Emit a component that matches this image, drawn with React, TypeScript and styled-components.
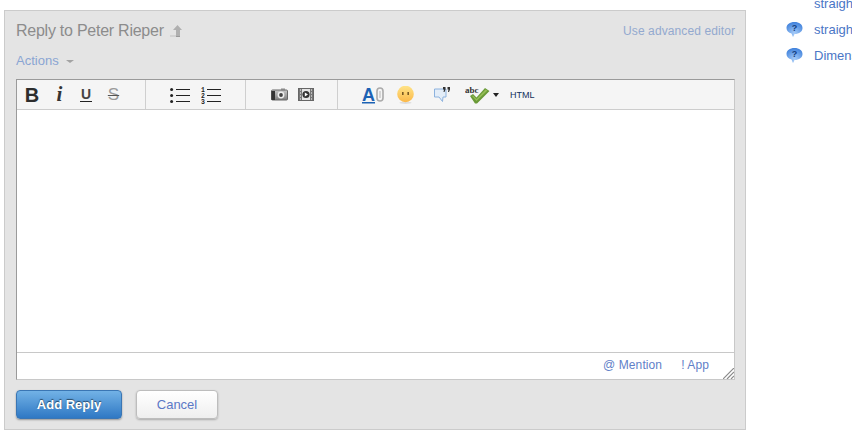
import React from 'react'
import styled, { createGlobalStyle } from 'styled-components'

const Global = createGlobalStyle`
  html, body {
    margin: 0;
    padding: 0;
    width: 852px;
    height: 433px;
    overflow: hidden;
    background: #fff;
    font-family: "Liberation Sans", Arial, sans-serif;
  }
`

const Page = styled.div`
  display: flex;
  align-items: flex-start;
  width: 852px;
  height: 433px;
  overflow: hidden;
  padding: 10px 0 0 4px;
  box-sizing: border-box;
`

const Panel = styled.div`
  flex: none;
  width: 742px;
  height: 420px;
  box-sizing: border-box;
  background: #e4e4e4;
  border: 1px solid #cbcbcb;
  padding: 0 10px 0 11px;
  display: flex;
  flex-direction: column;
`

const Head = styled.div`
  display: flex;
  align-items: center;
  justify-content: space-between;
  height: 39px;
`

const Title = styled.h2`
  margin: 0;
  display: flex;
  align-items: center;
  gap: 6px;
  font-size: 16px;
  font-weight: normal;
  letter-spacing: -0.25px;
  color: #8c8c8c;
`

const AdvancedLink = styled.a`
  font-size: 12px;
  color: #93a9cf;
  letter-spacing: 0.1px;
`

const Actions = styled.div`
  display: flex;
  align-items: center;
  gap: 7px;
  height: 20px;
  margin-bottom: 9px;
  font-size: 13px;
  color: #8aa5d3;
`

const Caret = styled.span`
  width: 0;
  height: 0;
  margin-top: 2px;
  border-left: 4px solid transparent;
  border-right: 4px solid transparent;
  border-top: 3px solid #a3a3a3;
`

const Editor = styled.div`
  width: 719px;
  height: 301px;
  box-sizing: border-box;
  background: #fff;
  border: 1px solid #c8c8c8;
  border-top-color: #9a9a9a;
  border-left-color: #9a9a9a;
  display: flex;
  flex-direction: column;
`

const Toolbar = styled.div`
  flex: none;
  display: flex;
  height: 29px;
  background: #f5f5f5;
  border-bottom: 1px solid #cdcdcd;
`

const Group = styled.div<{ $width: number; $pad: number; $last?: boolean }>`
  flex: none;
  box-sizing: border-box;
  width: ${p => p.$width}px;
  padding-left: ${p => p.$pad}px;
  display: flex;
  align-items: center;
  border-right: ${p => (p.$last ? 'none' : '1px solid #cfcfcf')};
`

const Tool = styled.span<{ $width: number }>`
  flex: none;
  width: ${p => p.$width}px;
  display: flex;
  align-items: center;
  justify-content: center;
  color: #333;
`

const BoldGlyph = styled.b`
  font-size: 20px;
  line-height: 1;
  color: #2d2d2d;
`

const ItalicGlyph = styled.i`
  font-family: "Liberation Serif", serif;
  font-weight: bold;
  font-size: 21px;
  line-height: 1;
  margin-left: 3px;
  color: #333;
`

const UnderGlyph = styled.span`
  font-size: 14px;
  font-weight: bold;
  line-height: 14px;
  margin-left: 2px;
  color: #444;
  border-bottom: 1px solid #222;
  padding: 0 1px;
`

const StrikeGlyph = styled.span`
  font-size: 17px;
  line-height: 1;
  padding: 0 1px;
  color: #9a9a9a;
  text-decoration: line-through;
  text-decoration-color: #555;
  text-decoration-thickness: 1px;
`

const HtmlLabel = styled.span`
  font-size: 9px;
  color: #12305c;
`

const EditArea = styled.div`
  flex: 1;
`

const EditorFoot = styled.div`
  flex: none;
  position: relative;
  height: 27px;
  border-top: 1px solid #c8c8c8;
  display: flex;
  align-items: center;
  justify-content: flex-end;
  gap: 19px;
  padding-right: 25px;
  padding-bottom: 2px;
  box-sizing: border-box;
  font-size: 12px;
  letter-spacing: 0.1px;
  color: #5f7fc8;
`

const Grip = styled.svg`
  position: absolute;
  right: 0;
  bottom: 0;
`

const Buttons = styled.div`
  display: flex;
  gap: 14px;
  margin-top: 10px;
`

const Primary = styled.button`
  width: 106px;
  height: 29px;
  padding: 0;
  border: 1px solid #3a76b4;
  border-radius: 4px;
  background: linear-gradient(#72b2e6, #2f78c4);
  box-shadow: 0 1px 2px rgba(0, 0, 0, 0.35);
  color: #fff;
  font-family: inherit;
  font-size: 13px;
  font-weight: bold;
  text-shadow: 0 -1px 1px rgba(0, 0, 0, 0.55);
`

const Secondary = styled.button`
  width: 82px;
  height: 29px;
  padding: 0;
  border: 1px solid #bdbdbd;
  border-radius: 4px;
  background: linear-gradient(#fff, #efefef);
  box-shadow: 0 1px 2px rgba(0, 0, 0, 0.25);
  color: #5b78c6;
  font-family: inherit;
  font-size: 13px;
`

const Sidebar = styled.ul`
  flex: none;
  list-style: none;
  margin: -15px 0 0 40px;
  padding: 0;
  display: flex;
  flex-direction: column;
  gap: 9px;
  font-size: 13px;
  color: #4a76c6;
`

const SideItem = styled.li`
  display: flex;
  align-items: center;
  height: 17px;
  padding-left: 28px;
  position: relative;
  white-space: nowrap;
`

const Bubble = styled.svg`
  position: absolute;
  left: 0;
  top: 0;
`

const ArrowUp = () => (
  <svg width="13" height="12" viewBox="0 0 13 12">
    <path d="M7.5 0 L12 5 H10 V11 H6 V5 H3 Z" fill="#b0b0b0" />
    <path d="M0 10 H6 V12 H0 Z" fill="#d2d2d2" />
    <path d="M6 11 H10 V12 H6 Z" fill="#999" />
  </svg>
)

const BulletList = () => (
  <svg width="20" height="16" viewBox="0 0 20 16">
    {[2, 8, 14].map(y => (
      <g key={y}>
        <circle cx="1.6" cy={y + 0.5} r="1.5" fill="#222" />
        <rect x="6" y={y} width="14" height="1" fill="#222" />
      </g>
    ))}
  </svg>
)

const NumberList = () => (
  <svg width="20" height="20" viewBox="0 0 20 20">
    {[4, 10, 16].map((y, i) => (
      <g key={y}>
        <text x="0" y={y + 3} fontSize="6.5" fontWeight="bold" fontFamily="Liberation Mono" fill="#222">
          {i + 1}
        </text>
        <rect x="6" y={y} width="14" height="1" fill="#222" />
      </g>
    ))}
  </svg>
)

const Camera = () => (
  <svg width="17" height="13" viewBox="0 0 17 13">
    <defs>
      <linearGradient id="cam" x1="0" y1="0" x2="0" y2="1">
        <stop offset="0" stopColor="#c9c9c9" />
        <stop offset="1" stopColor="#7d7d7d" />
      </linearGradient>
    </defs>
    <rect x="0.5" y="2" width="16" height="10" rx="1" fill="url(#cam)" stroke="#666" />
    <rect x="0.5" y="3" width="3.5" height="9" fill="#333" />
    <rect x="10" y="0.5" width="4" height="2" fill="#888" />
    <circle cx="10" cy="7" r="3.4" fill="#eee" />
    <circle cx="10" cy="7" r="1.9" fill="#444" />
  </svg>
)

const Film = () => (
  <svg width="16" height="13" viewBox="0 0 16 13">
    <rect x="0.5" y="0.5" width="15" height="12" fill="#e4e4e4" stroke="#666" />
    <rect x="1" y="1" width="3" height="11" fill="#777" />
    <rect x="12" y="1" width="3" height="11" fill="#777" />
    {[2, 5, 8, 11].map(y => (
      <g key={y}>
        <rect x="2" y={y - 0.5} width="1" height="1" fill="#fff" />
        <rect x="13" y={y - 0.5} width="1" height="1" fill="#fff" />
      </g>
    ))}
    <circle cx="8" cy="6.5" r="3.6" fill="#333" />
    <path d="M6.8 4.4 L10 6.5 L6.8 8.6 Z" fill="#fff" />
  </svg>
)

const LinkA = () => (
  <svg width="24" height="18" viewBox="0 0 24 18">
    <text x="0" y="14.5" fontSize="18" fontFamily="Liberation Sans" fontWeight="bold" fill="#1c62b4">
      A
    </text>
    <rect x="0" y="16" width="13" height="1.5" fill="#1c62b4" />
    <rect x="15" y="2" width="6" height="13" rx="3" fill="none" stroke="#ababab" strokeWidth="1.6" />
    <path d="M18 5 V12" stroke="#c8c8c8" strokeWidth="1.4" />
  </svg>
)

const Smiley = () => (
  <svg width="17" height="18" viewBox="0 0 17 18">
    <defs>
      <linearGradient id="smile" x1="0" y1="0" x2="0" y2="1">
        <stop offset="0" stopColor="#ffe488" />
        <stop offset="1" stopColor="#fbb848" />
      </linearGradient>
    </defs>
    <ellipse cx="8.5" cy="16.8" rx="6" ry="1.1" fill="#ddd" />
    <circle cx="8.5" cy="8" r="8.3" fill="url(#smile)" />
    <rect x="5" y="6" width="1.6" height="3" fill="#7a5a20" />
    <rect x="10.4" y="6" width="1.6" height="3" fill="#7a5a20" />
  </svg>
)

const Quote = () => (
  <svg width="18" height="17" viewBox="0 0 18 17">
    <path d="M1.5 3 H13 V11 H10 L9.5 15.5 L6 11 H1.5 Z" fill="#e3edf8" stroke="#8cb2de" />
    <path d="M10 1 H12.5 V3.5 L11.5 6 H10.5 L11 3.5 H10 Z M14.5 1 H17 V3.5 L16 6 H15 L15.5 3.5 H14.5 Z" fill="#333" />
  </svg>
)

const Spell = () => (
  <svg width="25" height="19" viewBox="0 0 25 19">
    <path d="M5 11 L8 9 L11.5 12.5 L20 3 L24.5 6 L12 18.5 H10 Z" fill="#6a9a38" />
    <path d="M7 11 L8 10.5 L11.5 14 L20.5 4.5 L22.5 5.5 L11.5 16 Z" fill="#94bd55" />
    <text x="0" y="7.5" fontSize="9" fontFamily="Liberation Serif" fontWeight="bold" fill="#333">
      abc
    </text>
  </svg>
)

const SmallCaret = styled.span`
  width: 0;
  height: 0;
  margin: 1px 0 0 3px;
  border-left: 3px solid transparent;
  border-right: 3px solid transparent;
  border-top: 4px solid #222;
`

const HelpBubble = () => (
  <Bubble width="17" height="17" viewBox="0 0 17 17">
    <defs>
      <radialGradient id="help" cx="0.5" cy="0.75" r="0.75">
        <stop offset="0" stopColor="#a8cdf8" />
        <stop offset="1" stopColor="#3f81dc" />
      </radialGradient>
    </defs>
    <path d="M8.5 1 C13.2 1 16.5 3.4 16.5 7 C16.5 10.6 13.2 13 8.5 13 L7 16 L5.5 12.6 C2.6 11.8 0.5 9.8 0.5 7 C0.5 3.4 3.8 1 8.5 1 Z" fill="url(#help)" />
    <text x="8.5" y="10" textAnchor="middle" fontSize="9" fontWeight="bold" fontFamily="Liberation Sans" fill="#15407f">
      ?
    </text>
  </Bubble>
)

const App: React.FC = () => (
  <Page>
    <Global />
    <Panel>
      <Head>
        <Title>
          Reply to Peter Rieper
          <ArrowUp />
        </Title>
        <AdvancedLink>Use advanced editor</AdvancedLink>
      </Head>
      <Actions>
        Actions
        <Caret />
      </Actions>
      <Editor>
        <Toolbar>
          <Group $width={129} $pad={3}>
            <Tool $width={24}><BoldGlyph>B</BoldGlyph></Tool>
            <Tool $width={28}><ItalicGlyph>i</ItalicGlyph></Tool>
            <Tool $width={26}><UnderGlyph>U</UnderGlyph></Tool>
            <Tool $width={31}><StrikeGlyph>S</StrikeGlyph></Tool>
          </Group>
          <Group $width={100} $pad={24}>
            <Tool $width={20}><BulletList /></Tool>
            <Tool $width={11} />
            <Tool $width={20}><NumberList /></Tool>
          </Group>
          <Group $width={92} $pad={25}>
            <Tool $width={17}><Camera /></Tool>
            <Tool $width={10} />
            <Tool $width={16}><Film /></Tool>
          </Group>
          <Group $width={397} $pad={24} $last>
            <Tool $width={24}><LinkA /></Tool>
            <Tool $width={11} />
            <Tool $width={17}><Smiley /></Tool>
            <Tool $width={19} />
            <Tool $width={18}><Quote /></Tool>
            <Tool $width={14} />
            <Tool $width={25}><Spell /></Tool>
            <SmallCaret />
            <Tool $width={11} />
            <HtmlLabel>HTML</HtmlLabel>
          </Group>
        </Toolbar>
        <EditArea />
        <EditorFoot>
          <span>@ Mention</span>
          <span>! App</span>
          <Grip width="11" height="11" viewBox="0 0 11 11">
            <path d="M0 11 L11 0 M4 11 L11 4 M8 11 L11 8" stroke="#8a8a8a" strokeWidth="1.2" />
          </Grip>
        </EditorFoot>
      </Editor>
      <Buttons>
        <Primary>Add Reply</Primary>
        <Secondary>Cancel</Secondary>
      </Buttons>
    </Panel>
    <Sidebar>
      <SideItem>straight</SideItem>
      <SideItem><HelpBubble />straight</SideItem>
      <SideItem><HelpBubble />Dimensions</SideItem>
    </Sidebar>
  </Page>
)

export default App
